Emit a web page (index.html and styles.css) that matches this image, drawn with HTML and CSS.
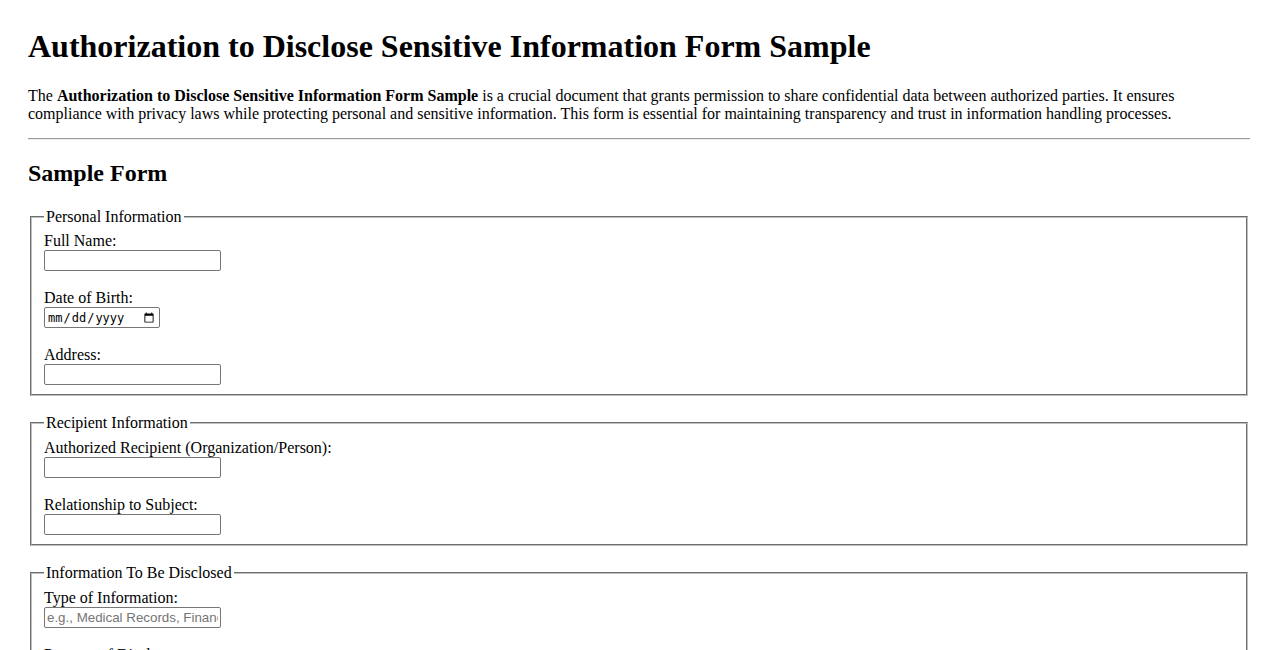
FILE: index.html
```html
<!DOCTYPE html>
<html lang="en">
<head>
<meta charset="utf-8">
<title>Authorization to Disclose Sensitive Information Form Sample</title>
<link rel="stylesheet" href="styles.css">
</head>
<body>
<h1>Authorization to Disclose Sensitive Information Form Sample</h1>
<p>The <strong>Authorization to Disclose Sensitive Information Form Sample</strong> is a crucial document that grants permission to share confidential data between authorized parties. It ensures compliance with privacy laws while protecting personal and sensitive information. This form is essential for maintaining transparency and trust in information handling processes.</p>
<hr>
<h2>Sample Form</h2>
<form>
  <fieldset class="group">
    <legend>Personal Information</legend>
    <label for="fullname">Full Name:</label><br>
    <input class="field" type="text" id="fullname"><br><br>
    <label for="dob">Date of Birth:</label><br>
    <input class="date" type="date" id="dob"><br><br>
    <label for="address">Address:</label><br>
    <input class="field" type="text" id="address">
  </fieldset>
  <fieldset class="group">
    <legend>Recipient Information</legend>
    <label for="recipient">Authorized Recipient (Organization/Person):</label><br>
    <input class="field" type="text" id="recipient"><br><br>
    <label for="relationship">Relationship to Subject:</label><br>
    <input class="field" type="text" id="relationship">
  </fieldset>
  <fieldset class="group">
    <legend>Information To Be Disclosed</legend>
    <label for="infotype">Type of Information:</label><br>
    <input class="field" type="text" id="infotype" placeholder="e.g., Medical Records, Financial Data"><br><br>
    <label for="purpose">Purpose of Disclosure:</label><br>
    <input class="field" type="text" id="purpose">
  </fieldset>
  <fieldset class="group">
    <legend>Authorization</legend>
    <label for="signature">Signature:</label><br>
    <input class="field" type="text" id="signature"><br><br>
    <label for="sigdate">Date:</label><br>
    <input class="date" type="date" id="sigdate">
  </fieldset>
  <button type="submit">Submit</button>
</form>
</body>
</html>
```
FILE: styles.css
```css
body {
  margin: 0;
  padding: 28px;
  font-family: "Liberation Serif", "Times New Roman", serif;
  font-size: 16px;
  color: #000;
  background: #fff;
}

h1 {
  font-size: 32px;
  margin: 0 0 22px;
}

h2 {
  font-size: 24px;
  margin: 19.92px 0 20.92px;
}

p {
  margin: 0 0 15px;
}

hr {
  border: 0;
  border-top: 1px solid #9a9a9a;
  border-bottom: 1px solid #eeeeee;
  margin: 8px 0;
}

.group {
  margin: 0 2px 18px;
  padding: 6.6px 12px 9px;
  border: 2px groove rgb(192, 192, 192);
}

.group legend {
  padding: 0 2px;
}

.field {
  width: 177px;
  height: 21px;
  box-sizing: border-box;
  font-family: "Liberation Sans", Arial, sans-serif;
  font-size: 13.333px;
  padding: 1px 2px;
  border: 1px solid #767676;
  border-radius: 2px;
  margin: 0;
}

.field::placeholder {
  color: #757575;
}

.date {
  width: 116px;
  height: 21px;
  box-sizing: border-box;
  font-family: "DejaVu Sans Mono", monospace;
  font-size: 12px;
  padding: 1px 2px;
  border: 1px solid #767676;
  border-radius: 2px;
  margin: 0;
}
```
